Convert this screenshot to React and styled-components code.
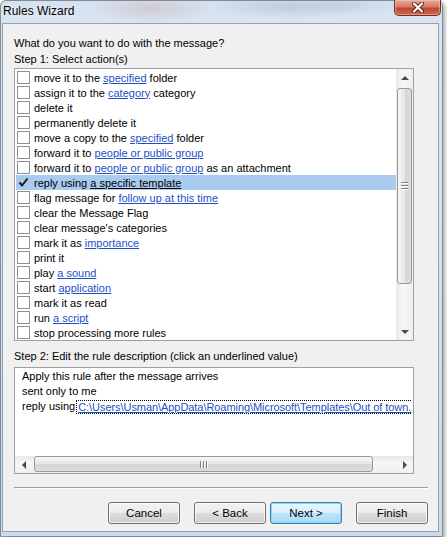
import React from "react";
import styled, { createGlobalStyle } from "styled-components";

const Global = createGlobalStyle`
  html, body {
    margin: 0;
    padding: 0;
    background: #ffffff;
  }
  body {
    font-family: "Liberation Sans", Arial, sans-serif;
    font-size: 11px;
    color: #000;
  }
`;

const Window = styled.div`
  box-sizing: border-box;
  width: 443px;
  height: 537px;
  display: flex;
  flex-direction: column;
  border: 1px solid #7d8b99;
  border-radius: 6px 6px 0 0;
  background:
    radial-gradient(ellipse 60px 14px at 150px 8px, rgba(190, 120, 120, 0.22), transparent),
    radial-gradient(ellipse 80px 12px at 290px 6px, rgba(120, 140, 170, 0.25), transparent),
    radial-gradient(ellipse 50px 10px at 350px 4px, rgba(160, 170, 190, 0.2), transparent),
    linear-gradient(180deg, #d4e1ee 0%, #dbe6f2 30px, #cbdbeb 100%);
  box-shadow: 2px 2px 4px rgba(0, 0, 0, 0.35);
`;

const TitleBar = styled.div`
  height: 22px;
  display: flex;
  justify-content: space-between;
  align-items: flex-start;
  padding: 0 1px 0 2px;
`;

const Title = styled.span`
  font-size: 12px;
  line-height: 20px;
  color: #000;
  text-shadow: 0 0 6px rgba(255, 255, 255, 0.9);
`;

const CloseButton = styled.div`
  box-sizing: border-box;
  width: 47px;
  height: 16px;
  margin-top: -1px;
  display: flex;
  align-items: center;
  justify-content: center;
  border: 1px solid #6e3026;
  border-top: none;
  border-radius: 0 0 5px 5px;
  background: linear-gradient(180deg, #e9a999 0%, #d77b69 45%, #c2452f 55%, #cf6a4f 100%);
  box-shadow: inset 0 0 0 1px rgba(255, 200, 190, 0.5);
`;

const Client = styled.div`
  flex: 1;
  margin: 0 3px 4px 1px;
  display: flex;
  flex-direction: column;
  background: #f0f0f0;
  border: 1px solid #93a3b3;
  padding: 11px 9px 0 11px;
`;

const Label = styled.div`
  line-height: 16px;
  white-space: nowrap;
  margin-top: ${(p) => p.$top || 0}px;
`;

const ListBox = styled.div`
  box-sizing: border-box;
  width: 400px;
  height: 273px;
  margin-top: 1px;
  border: 1px solid #a0a0a0;
  background: #fff;
  display: flex;
`;

const Rows = styled.div`
  flex: 1;
  padding-top: 1px;
  overflow: hidden;
`;

const Row = styled.div`
  height: 15px;
  margin-left: 1px;
  display: flex;
  align-items: center;
  gap: 4px;
  white-space: nowrap;
  background: ${(p) => (p.$selected ? "#a9cbef" : "transparent")};
`;

const Box = styled.span`
  box-sizing: border-box;
  width: 13px;
  height: 13px;
  flex: none;
  margin-left: 1px;
  border: 1px solid ${(p) => (p.$checked ? "#a9cbef" : "#8f8f8f")};
  background: ${(p) => (p.$checked ? "transparent" : "#fff")};
  display: flex;
  align-items: center;
  justify-content: center;
`;

const Link = styled.span`
  color: ${(p) => (p.$plain ? "#000" : "#1f4fc6")};
  text-decoration: underline;
`;

const VScroll = styled.div`
  width: 17px;
  flex: none;
  display: flex;
  flex-direction: column;
  background: linear-gradient(90deg, #e8e8e8, #f6f6f6 40%, #f0f0f0);
`;

const HScroll = styled.div`
  height: 17px;
  flex: none;
  display: flex;
  background: linear-gradient(180deg, #e8e8e8, #f6f6f6 40%, #f0f0f0);
`;

const ArrowButton = styled.div`
  width: 17px;
  height: 17px;
  flex: none;
  display: flex;
  align-items: center;
  justify-content: center;
`;

const Arrow = styled.span`
  width: 0;
  height: 0;
  ${(p) =>
    p.$dir === "up"
      ? "border-left: 4px solid transparent; border-right: 4px solid transparent; border-bottom: 4px solid #4a4a4a;"
      : p.$dir === "down"
      ? "border-left: 4px solid transparent; border-right: 4px solid transparent; border-top: 4px solid #4a4a4a;"
      : p.$dir === "left"
      ? "border-top: 4px solid transparent; border-bottom: 4px solid transparent; border-right: 4px solid #4a4a4a;"
      : "border-top: 4px solid transparent; border-bottom: 4px solid transparent; border-left: 4px solid #4a4a4a;"}
`;

const Track = styled.div`
  flex: 1;
  display: flex;
  flex-direction: ${(p) => (p.$horizontal ? "row" : "column")};
  padding: ${(p) => (p.$horizontal ? "0 0 0 2px" : "2px 0 0 0")};
`;

const Thumb = styled.div`
  box-sizing: border-box;
  ${(p) =>
    p.$horizontal
      ? `width: ${p.$size}px; height: 16px; margin-top: 0;
         background: linear-gradient(180deg, #f6f6f6, #e6e6e6 50%, #d6d6d6 51%, #dcdcdc);`
      : `height: ${p.$size}px; width: 15px; margin-left: 1px;
         background: linear-gradient(90deg, #f6f6f6, #e6e6e6 50%, #d6d6d6 51%, #dcdcdc);`}
  border: 1px solid #9a9a9a;
  border-radius: 3px;
  display: flex;
  align-items: center;
  justify-content: center;
  flex-direction: ${(p) => (p.$horizontal ? "row" : "column")};
  gap: 1px;
`;

const Grip = styled.span`
  display: block;
  background: #7f7f7f;
  border-${(p) => (p.$horizontal ? "right" : "bottom")}: 1px solid #fff;
  ${(p) => (p.$horizontal ? "width: 1px; height: 7px;" : "width: 7px; height: 1px;")}
`;

const DescBox = styled.div`
  box-sizing: border-box;
  width: 400px;
  height: 107px;
  margin-top: 3px;
  border: 1px solid #a0a0a0;
  background: #fff;
  display: flex;
  flex-direction: column;
`;

const DescText = styled.div`
  flex: 1;
  overflow: hidden;
  padding: 1px 0 0 7px;
`;

const DescLine = styled.div`
  line-height: 15px;
  white-space: nowrap;
  display: flex;
  align-items: center;
`;

const FocusLink = styled.span`
  color: #1f4fc6;
  text-decoration: underline;
  letter-spacing: -0.06px;
  border: 1px dotted #000;
  border-right: none;
  line-height: 12px;
  margin-left: 1px;
  padding: 0 0 0 1px;
`;

const Separator = styled.div`
  width: 414px;
  height: 1px;
  margin-top: 13px;
  background: #a0a0a0;
  border-bottom: 1px solid #fff;
`;

const ButtonRow = styled.div`
  display: flex;
  justify-content: flex-end;
  width: 414px;
  margin-top: 13px;
`;

const Button = styled.button`
  box-sizing: border-box;
  width: 72px;
  height: 22px;
  margin-left: ${(p) => p.$gap}px;
  font-family: inherit;
  font-size: 11.5px;
  color: #000;
  padding: 0;
  border-radius: 3px;
  border: 1px solid ${(p) => (p.$default ? "#3c7fb1" : "#707070")};
  background: ${(p) =>
    p.$default
      ? "linear-gradient(180deg, #eaf6fd 0%, #d9f0fc 50%, #bee6fd 51%, #a7d9f5 100%)"
      : "linear-gradient(180deg, #f2f2f2 0%, #ebebeb 50%, #dddddd 51%, #cfcfcf 100%)"};
  box-shadow: inset 0 0 0 1px ${(p) => (p.$default ? "#8ed2f5" : "rgba(255,255,255,0.75)")};
`;

const actions = [
  "move it to the [specified] folder",
  "assign it to the [category] category",
  "delete it",
  "permanently delete it",
  "move a copy to the [specified] folder",
  "forward it to [people or public group]",
  "forward it to [people or public group] as an attachment",
  "reply using [a specific template]",
  "flag message for [follow up at this time]",
  "clear the Message Flag",
  "clear message's categories",
  "mark it as [importance]",
  "print it",
  "play [a sound]",
  "start [application]",
  "mark it as read",
  "run [a script]",
  "stop processing more rules",
];

const Parts = ({ text, plain }) =>
  text.split(/(\[[^\]]+\])/).map((part, i) =>
    part.startsWith("[") ? (
      <Link key={i} $plain={plain}>
        {part.slice(1, -1)}
      </Link>
    ) : (
      <span key={i} style={{ whiteSpace: "pre" }}>
        {part}
      </span>
    )
  );

const Check = () => (
  <svg width="11" height="11" viewBox="0 0 11 11">
    <path d="M1.5 5.5 L4 8.5 L9.5 1.5" fill="none" stroke="#1a1a1a" strokeWidth="2" />
  </svg>
);

const CloseX = () => (
  <svg width="14" height="11" viewBox="0 0 14 11">
    <path d="M3 1.5 L11 9.5 M11 1.5 L3 9.5" stroke="#5a2018" strokeWidth="4" strokeLinecap="round" />
    <path d="M3 1.5 L11 9.5 M11 1.5 L3 9.5" stroke="#ffffff" strokeWidth="2.2" strokeLinecap="round" />
  </svg>
);

export default function App() {
  const selected = 7;
  return (
    <>
      <Global />
      <Window>
        <TitleBar>
          <Title>Rules Wizard</Title>
          <CloseButton>
            <CloseX />
          </CloseButton>
        </TitleBar>
        <Client>
          <Label>What do you want to do with the message?</Label>
          <Label>Step 1: Select action(s)</Label>
          <ListBox>
            <Rows>
              {actions.map((a, i) => (
                <Row key={i} $selected={i === selected}>
                  <Box $checked={i === selected}>{i === selected && <Check />}</Box>
                  <span>
                    <Parts text={a} plain={i === selected} />
                  </span>
                </Row>
              ))}
            </Rows>
            <VScroll>
              <ArrowButton>
                <Arrow $dir="up" />
              </ArrowButton>
              <Track>
                <Thumb $size={196}>
                  <Grip />
                  <Grip />
                  <Grip />
                </Thumb>
              </Track>
              <ArrowButton>
                <Arrow $dir="down" />
              </ArrowButton>
            </VScroll>
          </ListBox>
          <Label $top={7}>Step 2: Edit the rule description (click an underlined value)</Label>
          <DescBox>
            <DescText>
              <DescLine>Apply this rule after the message arrives</DescLine>
              <DescLine>sent only to me</DescLine>
              <DescLine>
                reply using
                <FocusLink>C:\Users\Usman\AppData\Roaming\Microsoft\Templates\Out of town.</FocusLink>
              </DescLine>
            </DescText>
            <HScroll>
              <ArrowButton>
                <Arrow $dir="left" />
              </ArrowButton>
              <Track $horizontal>
                <Thumb $horizontal $size={339}>
                  <Grip $horizontal />
                  <Grip $horizontal />
                  <Grip $horizontal />
                </Thumb>
              </Track>
              <ArrowButton>
                <Arrow $dir="right" />
              </ArrowButton>
            </HScroll>
          </DescBox>
          <Separator />
          <ButtonRow>
            <Button $gap={0}>Cancel</Button>
            <Button $gap={14}>&lt; Back</Button>
            <Button $gap={4} $default>
              Next &gt;
            </Button>
            <Button $gap={14}>Finish</Button>
          </ButtonRow>
        </Client>
      </Window>
    </>
  );
}
